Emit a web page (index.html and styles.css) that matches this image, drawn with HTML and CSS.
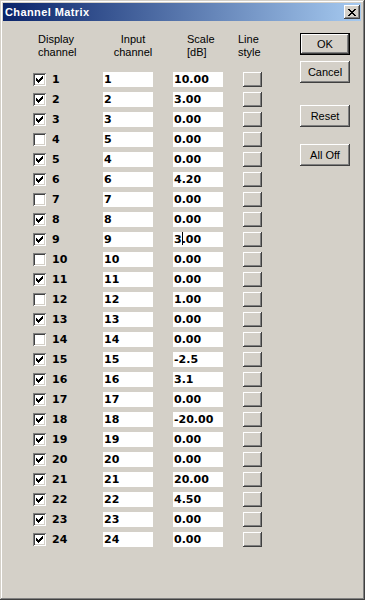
FILE: index.html
```html
<!DOCTYPE html>
<html lang="en">
<head>
    <meta charset="UTF-8">
    <meta name="viewport" content="width=device-width, initial-scale=1.0">
    <title>Channel Matrix</title>
    <link rel="stylesheet" href="styles.css">
</head>
<body>
    <div class="window">
        <div class="titlebar">
            <span class="title">Channel Matrix</span>
            <span class="close">
                <svg width="8" height="7" viewBox="0 0 8 7"><path d="M0 0h2v1h-2zM6 0h2v1h-2zM1 1h2v1h-2zM5 1h2v1h-2zM2 2h4v1h-4zM3 3h2v1h-2zM2 4h4v1h-4zM1 5h2v1h-2zM5 5h2v1h-2zM0 6h2v1h-2zM6 6h2v1h-2z" fill="#000"/></svg>
            </span>
        </div>

        <div class="content">
            <div class="matrix">
                <div class="head">
                    <div class="h-display">Display<br>channel</div>
                    <div class="h-input">Input<br>channel</div>
                    <div class="h-scale">Scale<br>[dB]</div>
                    <div class="h-line">Line<br>style</div>
                </div>
                <div id="rows">
                    <!-- rows are filled in by the script below -->
                </div>
            </div>

            <div class="buttons">
                <div class="btn default">OK</div>
                <div class="btn cancel">Cancel</div>
                <div class="btn reset">Reset</div>
                <div class="btn alloff">All Off</div>
            </div>
        </div>
    </div>

    <script>
        // [checked, input channel, scale]
        const channels = [
            [1, '1', '10.00'], [1, '2', '3.00'], [1, '3', '0.00'], [0, '5', '0.00'],
            [1, '4', '0.00'], [1, '6', '4.20'], [0, '7', '0.00'], [1, '8', '0.00'],
            [1, '9', '3.00'], [0, '10', '0.00'], [1, '11', '0.00'], [0, '12', '1.00'],
            [1, '13', '0.00'], [0, '14', '0.00'], [1, '15', '-2.5'], [1, '16', '3.1'],
            [1, '17', '0.00'], [1, '18', '-20.00'], [1, '19', '0.00'], [1, '20', '0.00'],
            [1, '21', '20.00'], [1, '22', '4.50'], [1, '23', '0.00'], [1, '24', '0.00']
        ];

        const checkSvg = '<svg width="7" height="7" viewBox="0 0 7 7"><path d="M0 2h1v3h-1zM1 3h1v3h-1zM2 4h1v3h-1zM3 3h1v3h-1zM4 2h1v3h-1zM5 1h1v3h-1zM6 0h1v3h-1z" fill="#000"/></svg>';

        const rowsEl = document.getElementById('rows');

        channels.forEach(function (ch, i) {
            const row = document.createElement('div');
            row.className = 'row';

            let scale = ch[2];
            // the text cursor sits in row 9
            if (i === 8) {
                scale = scale.charAt(0) + '<span class="caret"></span>' + scale.substring(1);
            }

            row.innerHTML =
                '<span class="check">' + (ch[0] ? checkSvg : '') + '</span>' +
                '<span class="num">' + (i + 1) + '</span>' +
                '<span class="field">' + ch[1] + '</span>' +
                '<span class="field">' + scale + '</span>' +
                '<span class="style-btn"></span>';

            rowsEl.appendChild(row);
        });
    </script>
</body>
</html>
```

FILE: styles.css
```css
body {
    margin: 0;
    font-family: "Liberation Sans", Arial, sans-serif;
    font-size: 11px;
    color: #000;
    background: #d4d0c8;
}
.window {
    width: 365px;
    height: 600px;
    box-sizing: border-box;
    padding: 3px 4px 4px 3px;
    background: #d4d0c8;
    box-shadow: inset -1px -1px #404040, inset 1px 1px #d4d0c8,
                inset -2px -2px #808080, inset 2px 2px #ffffff;
}
.titlebar {
    height: 18px;
    display: flex;
    align-items: center;
    padding-left: 2px;
    background: linear-gradient(to right, #0a246a, #a6caf0);
}
.title {
    flex: 1;
    color: #fff;
    font-weight: bold;
    letter-spacing: 0.4px;
}
.close {
    width: 16px;
    height: 14px;
    margin-right: 1px;
    display: flex;
    align-items: center;
    justify-content: center;
    background: #d4d0c8;
    box-shadow: inset -1px -1px #404040, inset 1px 1px #ffffff,
                inset -2px -2px #808080;
}
.content {
    display: flex;
    padding-top: 12px;
}
.matrix {
    margin-left: 30px;
}
.head,
.row {
    display: grid;
    grid-template-columns: 13px 57px 70px 65px 24px;
}
.head {
    height: 26px;
    line-height: 13px;
    margin-bottom: 11px;
}
.h-display {
    grid-column: 1 / 3;
    padding-left: 5px;
}
.h-input {
    grid-column: 3;
    padding-right: 10px;
    text-align: center;
}
.h-scale {
    grid-column: 4;
    padding-left: 14px;
}
.h-line {
    grid-column: 5;
}
.row {
    height: 20px;
    align-items: start;
}
.check {
    width: 13px;
    height: 13px;
    margin-top: 3px;
    box-sizing: border-box;
    display: flex;
    align-items: center;
    justify-content: center;
    background: #fff;
    box-shadow: inset 1px 1px #808080, inset -1px -1px #ffffff,
                inset 2px 2px #404040, inset -2px -2px #d4d0c8;
}
.num,
.field {
    font-family: "DejaVu Sans", "Liberation Sans", sans-serif;
    font-weight: bold;
}
.num {
    padding-left: 6px;
    line-height: 20px;
}
.field {
    width: 50px;
    height: 15px;
    margin-top: 2px;
    padding-left: 1px;
    box-sizing: border-box;
    line-height: 15px;
    background: #fff;
}
.caret {
    display: inline-block;
    width: 1px;
    height: 13px;
    margin: 0 -1px -2px 0;
    background: #000;
}
.style-btn {
    width: 19px;
    height: 15px;
    margin: 2px 0 0 5px;
    background: #d4d0c8;
    box-shadow: inset -1px -1px #404040, inset 1px 1px #ffffff,
                inset -2px -2px #808080;
}
.buttons {
    margin-left: auto;
    margin-right: 11px;
    display: flex;
    flex-direction: column;
}
.btn {
    width: 50px;
    height: 22px;
    line-height: 22px;
    text-align: center;
    background: #d4d0c8;
    box-shadow: inset -1px -1px #404040, inset 1px 1px #ffffff,
                inset -2px -2px #808080;
}
.btn.default {
    box-shadow: inset 0 0 0 1px #000, inset -2px -2px #404040,
                inset 2px 2px #ffffff, inset -3px -3px #808080;
}
.cancel {
    margin-top: 6px;
}
.reset {
    margin-top: 22px;
}
.alloff {
    margin-top: 17px;
}
```
